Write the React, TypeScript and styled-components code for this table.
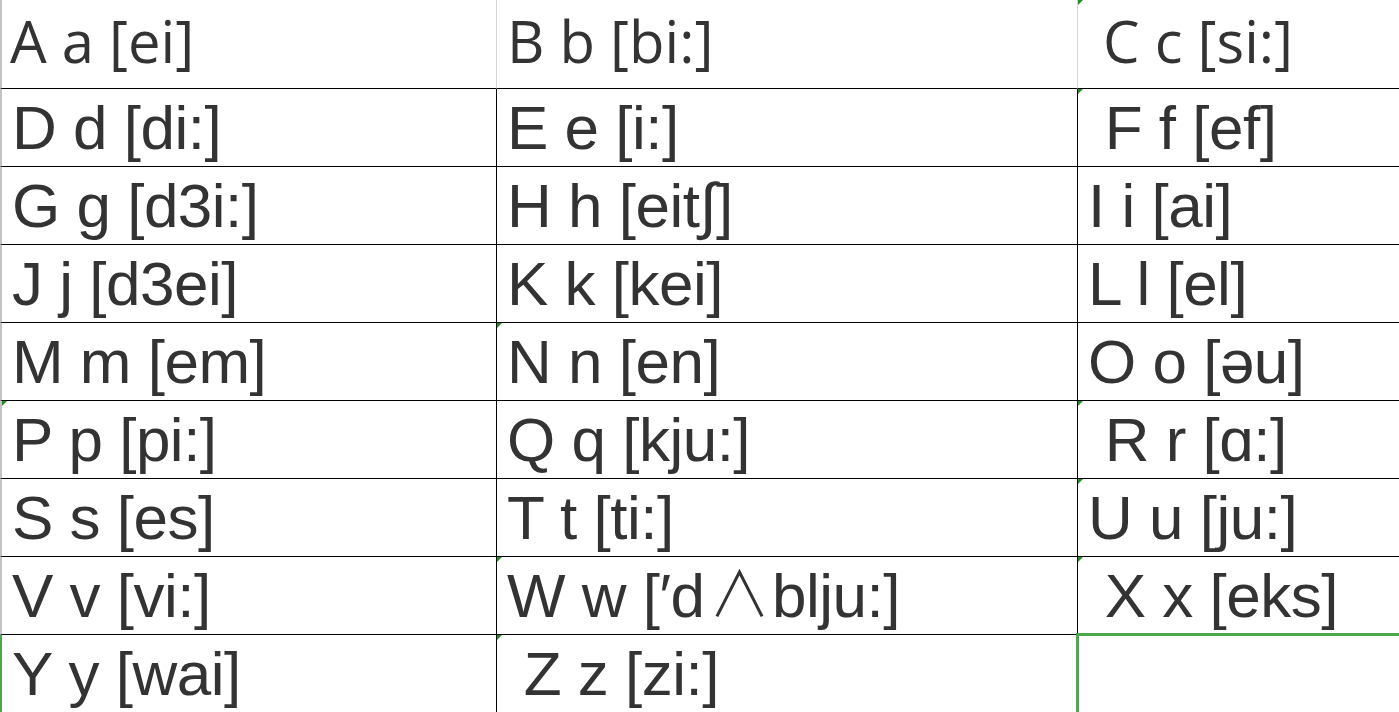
import styled, { createGlobalStyle } from 'styled-components'

const GlobalStyle = createGlobalStyle`
    html, body {
        margin: 0;
        padding: 0;
        background: #ffffff;
        overflow: hidden;
    }
`

const Sheet = styled.div`
    display: grid;
    grid-template-columns: 497px 581px 1fr;
    grid-template-rows: 89px repeat(8, 78px);
    width: 1399px;
    height: 712px;
    overflow: hidden;
    background: #ffffff;
`

const Cell = styled.div.attrs(
    (props: { $head?: boolean; $first?: boolean; $last?: boolean; $edge?: boolean; $selected?: boolean }) => props
)`
    position: relative;
    box-sizing: border-box;
    padding: ${(props) => (props.$head ? '0' : '1px')} 0 0 ${(props) => (props.$head && props.$first ? '8px' : '10px')};
    border-bottom: 1px solid #000000;
    border-right: ${(props) => (props.$last ? 'none' : props.$head ? '1px solid #d4d4d4' : '1px solid #000000')};
    border-left: ${(props) => (props.$first ? `2px solid ${props.$edge ? '#4aa84a' : '#c4c4c4'}` : 'none')};
    font-family: ${(props) => (props.$head ? '"Open Sans", "Liberation Sans", sans-serif' : '"Liberation Sans", Arial, sans-serif')};
    font-size: ${(props) => (props.$head ? '58px' : '62px')};
    letter-spacing: ${(props) => (props.$head ? '0' : '-0.5px')};
    line-height: ${(props) => (props.$head ? '81px' : '76px')};
    color: #333333;
    white-space: pre;
    overflow: ${(props) => (props.$selected ? 'visible' : 'hidden')};
    z-index: ${(props) => (props.$selected ? 2 : 1)};
`

// the wide "∧" in W's phonetic comes from a CJK font in the original sheet
const Wide = styled.span`
    font-family: "Noto Sans CJK SC", "Liberation Sans", sans-serif;
    font-weight: 300;
    line-height: 60px;
    margin: 0 2px 0 4px;
`

const Marker = styled.span`
    position: absolute;
    top: 0;
    left: 0;
    width: 0;
    height: 0;
    border-top: 5px solid #1f8f1f;
    border-right: 5px solid transparent;
`

const Selection = styled.span`
    position: absolute;
    top: -2px;
    left: -2px;
    right: -6px;
    bottom: -6px;
    border: 3px solid #4aa84a;
    pointer-events: none;
`

const rows: string[][] = [
    ['A a [ei]', 'B b [bi:]', ' C c [si:]'],
    ['D d [di:]', 'E e [i:]', ' F f [ef]'],
    ['G g [d3i:]', 'H h [eit∫]', 'I i [ai]'],
    ['J j [d3ei]', 'K k [kei]', 'L l [el]'],
    ['M m [em]', 'N n [en]', 'O o [əu]'],
    ['P p [pi:]', 'Q q [kju:]', ' R r [ɑ:]'],
    ['S s [es]', 'T t [ti:]', 'U u [ju:]'],
    ['V v [vi:]', 'W w [′d∧blju:]', ' X x [eks]'],
    ['Y y [wai]', ' Z z [zi:]', ''],
]

const markers = new Set(['0-2', '1-2', '4-1', '5-0', '5-2', '6-2', '7-1', '7-2', '8-1'])

const renderText = (text: string) => {
    if (!text.includes('∧')) return text
    const [before, after] = text.split('∧')
    return (
        <>
            {before}
            <Wide>∧</Wide>
            {after}
        </>
    )
}

const App = () => {
    return (
        <>
            <GlobalStyle />
            <Sheet>
                {rows.map((row, r) =>
                    row.map((text, c) => {
                        const selected = r === 8 && c === 2
                        return (
                            <Cell
                                key={r + '-' + c}
                                $head={r === 0}
                                $first={c === 0}
                                $last={c === 2}
                                $edge={r === 8 && c === 0}
                                $selected={selected}
                            >
                                {markers.has(r + '-' + c) && <Marker />}
                                {selected && <Selection />}
                                {renderText(text)}
                            </Cell>
                        )
                    })
                )}
            </Sheet>
        </>
    )
}

export default App
